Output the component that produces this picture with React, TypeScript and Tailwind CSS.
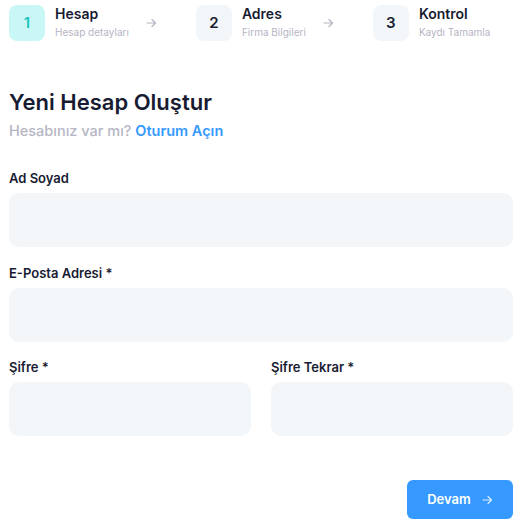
import React from "react";

const Arrow = ({ className = "" }: { className?: string }) => (
  <svg width="11" height="12" viewBox="0 0 11 12" fill="none" className={className}>
    <path d="M1 6h8.5M6 2.5L9.5 6 6 9.5" stroke="currentColor" strokeWidth="1.2" strokeLinecap="round" strokeLinejoin="round" />
  </svg>
);

const Step = ({ n, title, sub, active }: { n: string; title: string; sub: string; active?: boolean }) => (
  <div className="flex items-center">
    <div
      className={`w-[36px] h-[36px] rounded-[8px] flex items-center justify-center text-[15px] font-semibold ${
        active ? "bg-[#c9f7f5] text-[#1bc5bd]" : "bg-[#f3f6f9] text-[#181c32]"
      }`}
    >
      {n}
    </div>
    <div className="ml-[10px] flex flex-col -mt-[3px]">
      <div className="text-[14px] font-semibold text-[#181c32] leading-[17px]">{title}</div>
      <div className="text-[10px] text-[#b5b5c3] leading-[14px] mt-[3px]">{sub}</div>
    </div>
  </div>
);

export default function App() {
  return (
    <div className="w-[530px] h-[526px] bg-white pl-[9px] pr-[17px] pt-[5px]" style={{ fontFamily: "Inter, 'Open Sans', sans-serif" }}>
      <div className="flex items-center">
        <Step n="1" title="Hesap" sub="Hesap detayları" active />
        <Arrow className="text-[#b5b5c3] ml-[17px] mr-[39px]" />
        <Step n="2" title="Adres" sub="Firma Bilgileri" />
        <Arrow className="text-[#b5b5c3] ml-[17px] mr-[39px]" />
        <Step n="3" title="Kontrol" sub="Kaydı Tamamla" />
      </div>

      <h1 className="mt-[48px] text-[22px] font-semibold text-[#181c32] leading-[26px]">Yeni Hesap Oluştur</h1>
      <div className="mt-[6px] text-[14.5px] font-medium text-[#b5b5c3] leading-[20px]">
        Hesabınız var mı? <span className="text-[#3699ff] font-semibold">Oturum Açın</span>
      </div>

      <div className="mt-[29px] flex flex-col">
        <label className="text-[13px] font-semibold text-[#181c32] leading-[16px]">Ad Soyad</label>
        <div className="mt-[7px] h-[54px] rounded-[10px] bg-[#f3f6f9]" />
      </div>

      <div className="mt-[18px] flex flex-col">
        <label className="text-[13px] font-semibold text-[#181c32] leading-[16px]">E-Posta Adresi *</label>
        <div className="mt-[7px] h-[54px] rounded-[10px] bg-[#f3f6f9]" />
      </div>

      <div className="mt-[17px] grid grid-cols-2 gap-[20px]">
        <div className="flex flex-col">
          <label className="text-[13px] font-semibold text-[#181c32] leading-[16px]">Şifre *</label>
          <div className="mt-[7px] h-[54px] rounded-[10px] bg-[#f3f6f9]" />
        </div>
        <div className="flex flex-col">
          <label className="text-[13px] font-semibold text-[#181c32] leading-[16px]">Şifre Tekrar *</label>
          <div className="mt-[7px] h-[54px] rounded-[10px] bg-[#f3f6f9]" />
        </div>
      </div>

      <div className="mt-[44px] flex justify-end">
        <button className="w-[106px] h-[39px] rounded-[6px] bg-[#3699ff] text-white text-[13px] font-semibold flex items-center justify-center">
          <span>Devam</span>
          <Arrow className="ml-[11px] text-[#d7eaff]" />
        </button>
      </div>
    </div>
  );
}
